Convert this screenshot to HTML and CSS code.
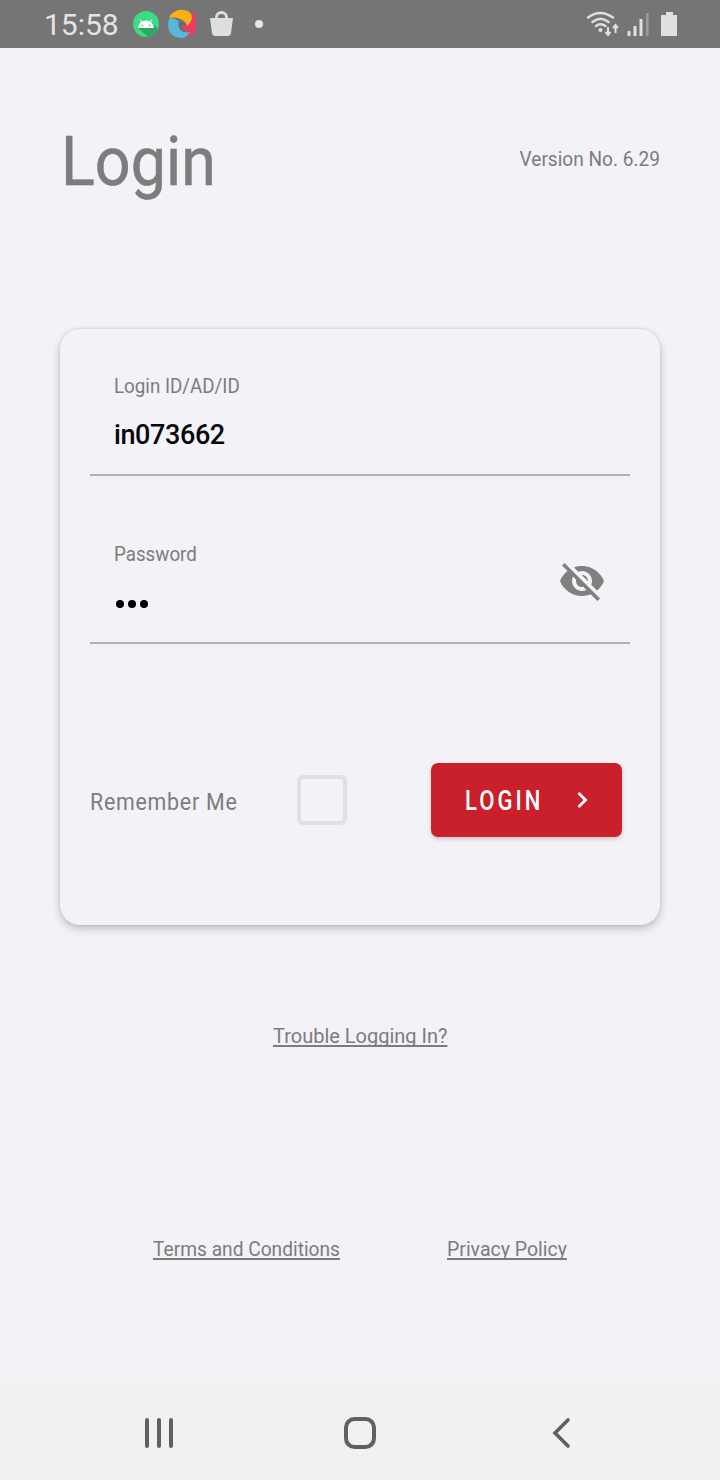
FILE: index.html
```html
<!DOCTYPE html>
<html lang="en">
<head>
<meta charset="utf-8">
<title>Login</title>
<link rel="stylesheet" href="styles.css">
</head>
<body>
<div class="screen">
  <header class="status">
    <span class="clock">15:58</span>
    <svg class="notifications" width="136" height="48" viewBox="0 0 136 48">
      <circle cx="14" cy="24" r="13" fill="#3ddc84"/>
      <path d="M18 21 26 29A13 13 0 0 1 16 37L6 28Z" fill="#2ba866"/>
      <path d="M6 28a8 7.500 0 0 1 16 0Z" fill="#fff"/>
      <path d="M9.500 22 8 19.500M18.500 22 20 19.500" stroke="#fff" stroke-width="1"/>
      <circle cx="10.500" cy="25.500" r=".8" fill="#3a8"/><circle cx="17.500" cy="25.500" r=".8" fill="#3a8"/>
      <path d="M37 19C34 30 39 37 48 38C54 38 58 36 60 32C51 34 46 30 47 22C44 19 41 17 37 19Z" fill="#54b9d9"/>
      <path d="M57 13 64 14V27C64 33 60 37 53 37C56 35 58 33 59 31C54 32 50 30 49 27C57 27 60 20 57 13Z" fill="#ee3a66"/>
      <path d="M37 18C39 13 45 9 51 10C57 10 60 14 60 18C59 22 57 24 55 26C54 20 46 16 37 18Z" fill="#fbb016"/>
      <path d="M47 22C50 21 54 22 55 26C53 26 51 26 50 26C50 29 52 31 54 32C49 32 45 28 47 22Z" fill="#706b70"/>
      <path d="M78 18H101L99 33Q98.500 36 95.500 36H83.500Q80.500 36 80 33Z" fill="#dedede"/>
      <path d="M84.500 19v-2a5 4.500 0 0 1 10 0v2" fill="none" stroke="#dedede" stroke-width="2.800"/>
      <circle cx="127" cy="24" r="4" fill="#e6e6e6"/>
    </svg>
    <svg class="signals" width="94" height="48" viewBox="0 0 94 48" fill="none" stroke="#e0e0e0">
      <path d="M2 17.500Q14 8.500 27 17.500M6.500 22Q14.500 15.500 22.500 22M10 26Q14.500 22.500 19.500 26" stroke-width="2.400" stroke-linecap="round"/>
      <circle cx="14.500" cy="30" r="2" fill="#e0e0e0" stroke="none"/>
      <path d="M22 27v7M19.500 32l2.500 3 2.500-3M29.500 33v-7M27 28l2.500-3 2.500 3" stroke-width="2"/>
      <path d="M43 31v5M49 26v10M55 19v17" stroke-width="3"/>
      <path d="M61.300 13v23" stroke="#9b9b9b" stroke-width="2.600"/>
      <path d="M80 12h7v3h4v21H75V15h5Z" fill="#e0e0e0" stroke="none"/>
    </svg>
  </header>
  <main>
    <div class="heading">
      <h1>Login</h1>
      <span class="version">Version No. 6.29</span>
    </div>
    <form class="card">
      <div class="field">
        <div>
          <div class="label">Login ID/AD/ID</div>
          <div class="value">in073662</div>
        </div>
      </div>
      <div class="field password">
        <div>
          <div class="label">Password</div>
          <div class="dots"><i></i><i></i><i></i></div>
        </div>
        <svg class="eye" width="48" height="48" viewBox="0 0 24 24" fill="#808080"><path d="M12 7c2.760 0 5 2.240 5 5 0 .650-.130 1.260-.360 1.830l2.920 2.920c1.510-1.260 2.700-2.890 3.430-4.750-1.730-4.390-6-7.500-11-7.500-1.400 0-2.740.250-3.980.700l2.160 2.160C10.740 7.130 11.350 7 12 7zM2 4.270l2.280 2.280.460.460C3.080 8.300 1.780 10.020 1 12c1.730 4.390 6 7.500 11 7.500 1.550 0 3.030-.300 4.380-.840l.420.420L19.730 22 21 20.730 3.270 3 2 4.270zM7.530 9.800l1.550 1.550c-.050.210-.080.430-.080.650 0 1.660 1.340 3 3 3 .220 0 .440-.030.650-.080l1.550 1.550c-.670.330-1.410.530-2.200.530-2.760 0-5-2.240-5-5 0-.790.200-1.530.530-2.200zm4.310-.780l3.150 3.150.020-.160c0-1.660-1.340-3-3-3l-.170.010z"/></svg>
      </div>
      <div class="actions">
        <span class="remember">Remember Me</span>
        <span class="checkbox"></span>
        <button class="login" type="button"><span>LOGIN</span>
          <svg width="14" height="20" viewBox="0 0 14 20" fill="none" stroke="#fff" stroke-width="2.800"><path d="M2.500 3 9.500 10 2.500 17"/></svg>
        </button>
      </div>
    </form>
    <div class="help"><a class="link trouble">Trouble Logging In?</a></div>
    <div class="legal"><a class="link terms">Terms and Conditions</a><a class="link privacy">Privacy Policy</a></div>
  </main>
  <nav class="navbar">
    <svg width="32" height="36" viewBox="0 0 32 36" fill="none" stroke="#606060" stroke-width="4" stroke-linecap="round"><path d="M4 5v26M16 5v26M28 5v26"/></svg>
    <svg width="36" height="36" viewBox="0 0 36 36" fill="none" stroke="#606060" stroke-width="4"><rect x="4" y="4" width="28" height="28" rx="8.500"/></svg>
    <svg width="24" height="36" viewBox="0 0 24 36" fill="none" stroke="#606060" stroke-width="3.600" stroke-linecap="round"><path d="M18 5 5 18 18 31"/></svg>
  </nav>
</div>
</body>
</html>
```
FILE: styles.css
```css
* { box-sizing: border-box; }
body { margin: 0; background: #f2f2f7; font-family: Roboto, "Liberation Sans", sans-serif; color: #7c7c7f; }
svg { display: block; flex: none; }
.screen { width: 720px; height: 1480px; display: flex; flex-direction: column; overflow: hidden; }
.status { height: 48px; flex: none; background: #757575; display: flex; align-items: center; padding-left: 44px; }
.clock { width: 88px; font-size: 30px; line-height: 48px; padding-top: 1px; color: #e4e4e4; }
.signals { margin-left: 318px; }
main { flex: 1; padding: 0 60px; }
.heading { height: 281px; display: flex; justify-content: space-between; padding: 73px 0 0 1px; }
h1 { margin: 0; font-size: 69px; line-height: 82px; font-weight: 400; color: #7d7d7d; -webkit-text-stroke: .6px #7d7d7d; transform: scaleX(.91); transform-origin: left; }
.version { font-size: 20.500px; line-height: 24px; margin-top: 26px; white-space: nowrap; transform: scaleX(.93); transform-origin: right; }
.card { height: 596px; border-radius: 20px; background: #f2f2f7; padding: 0 30px; box-shadow: 0 4px 9px rgba(40,40,50,.23), 0 0 3px rgba(40,40,50,.17); }
.field { height: 147px; border-bottom: 2px solid #b2b2b6; padding: 45px 24px 0; display: flex; justify-content: space-between; }
.password { height: 168px; padding-top: 66px; }
.label { height: 24px; font-size: 20.500px; line-height: 24px; transform: scaleX(.915); transform-origin: left; white-space: nowrap; }
.value { margin-top: 21px; font-size: 27px; line-height: 32px; font-weight: 500; letter-spacing: -.4px; color: #08080a; }
.dots { display: flex; gap: 4px; padding: 34px 0 0 2px; }
.dots i { width: 8px; height: 8px; border-radius: 50%; background: #000; }
.eye { margin-top: 15px; }
.actions { display: flex; align-items: center; height: 74px; margin-top: 119px; }
.remember { width: 207px; font-size: 23px; line-height: 30px; letter-spacing: .8px; white-space: nowrap; transform: scaleX(.93); transform-origin: left; margin-top: 5px; }
.checkbox { width: 50px; height: 50px; border: 4px solid #e0e0e4; border-radius: 6px; }
.login { margin: 0 0 0 84px; width: 191px; height: 74px; border: 0; border-radius: 7px; background: #c9202b; color: #fff; display: flex; align-items: center; padding: 0 0 0 34px; font: 500 27.500px/32px Roboto, sans-serif; box-shadow: 0 2px 4px rgba(0,0,0,.18); }
.login span { width: 111px; text-align: left; letter-spacing: 3.800px; transform: scaleX(.8); transform-origin: left; margin-top: 2px; }
.link { font-size: 20.500px; line-height: 24px; display: block; white-space: nowrap; text-decoration: underline; text-decoration-thickness: 1.500px; text-underline-offset: 2px; text-decoration-skip-ink: none; transform-origin: left; }
.help { padding: 99px 0 0 213px; }
.trouble { transform: scaleX(.975); }
.legal { display: grid; grid-template-columns: 294px 1fr; padding: 189px 0 0 93px; }
.terms { transform: scaleX(.935); }
.privacy { transform: scaleX(.95); }
.navbar { height: 96px; flex: none; background: #f1f1f1; box-shadow: 0 -8px 0 #f2f2f3; display: grid; grid-template-columns: 199px 208px 24px; padding: 31px 0 0 143px; }
```
